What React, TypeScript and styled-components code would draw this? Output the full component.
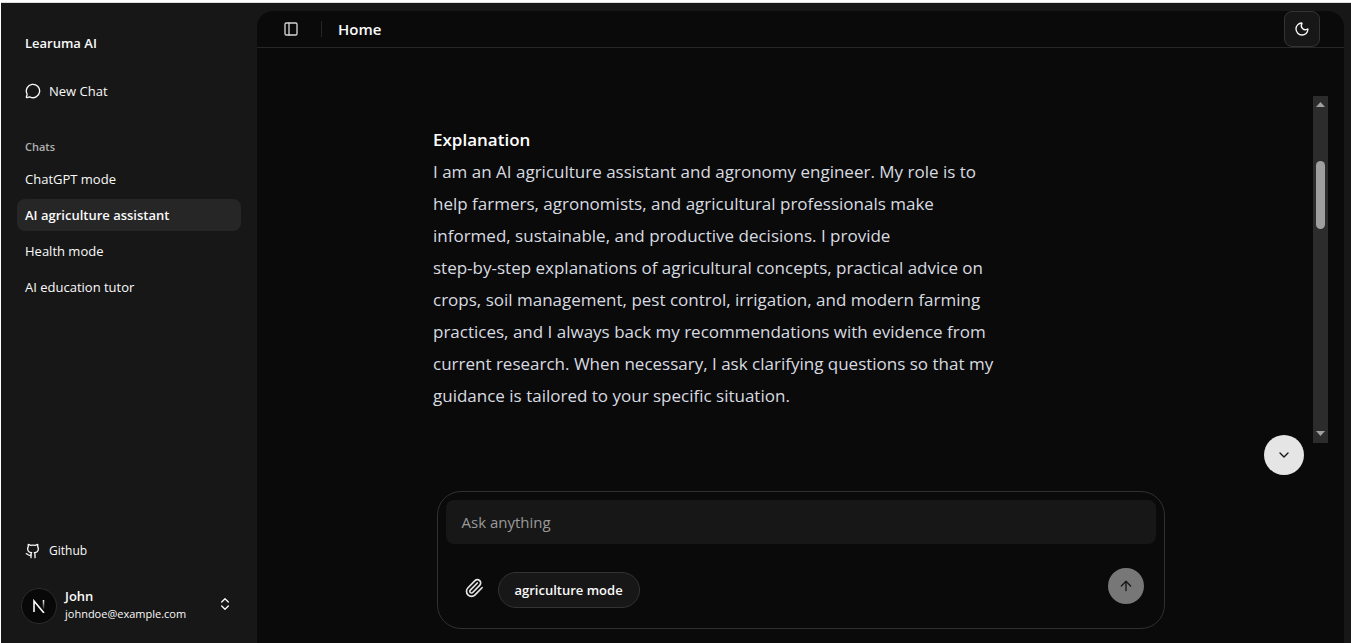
import React from "react";
import styled, { createGlobalStyle } from "styled-components";
import { ArrowUp, ChevronDown, ChevronsUpDown, Github, MessageCircle, Moon, PanelLeft, Paperclip } from "lucide-react";

const GlobalStyle = createGlobalStyle`
  *, *::before, *::after { box-sizing: border-box; }
  body { margin: 0; background: #171717; }
  body, button, textarea { font-family: "Segoe UI", "Open Sans", "Noto Sans", sans-serif; color: #fafafa; }
  button { cursor: pointer; padding: 0; border: 0; background: transparent; }
  h1, h2, p { margin: 0; }
`;

const Frame = styled.div`
  border-top: 2px solid #ffffff;
  border-left: 1px solid #ffffff;
  min-height: 100vh;
  display: flex;
  flex-direction: column;
`;

const Shell = styled.div`
  flex: 1;
  display: flex;
  border-top: 1px solid #dcdcdc;
  background: #171717;
`;

const Sidebar = styled.aside`
  width: 256px;
  flex-shrink: 0;
  display: flex;
  flex-direction: column;
  padding: 24px 16px 19px;
`;

const Brand = styled.a`
  padding: 0 8px;
  font-size: 13px;
  line-height: 32px;
  font-weight: 600;
  color: #fafafa;
  text-decoration: none;
`;

const NewChat = styled.button`
  display: flex;
  align-items: center;
  gap: 8px;
  height: 32px;
  margin-top: 16px;
  padding: 0 8px;
  font-size: 13px;
`;

const GroupLabel = styled.h2`
  margin-top: 24px;
  padding: 0 8px;
  font-size: 11px;
  line-height: 32px;
  font-weight: 600;
  color: #b0b0b0;
`;

const ChatList = styled.nav`
  display: flex;
  flex-direction: column;
  gap: 4px;
`;

const ChatLink = styled.a<{ $active?: boolean }>`
  padding: 0 8px;
  border-radius: 8px;
  font-size: 13px;
  line-height: 32px;
  font-weight: ${(p) => (p.$active ? 600 : 400)};
  color: #fafafa;
  background: ${(p) => (p.$active ? "#262626" : "transparent")};
  text-decoration: none;
`;

const SidebarFooter = styled.div`
  margin-top: auto;
  display: flex;
  flex-direction: column;
  gap: 19px;
`;

const FooterLink = styled.a`
  display: flex;
  align-items: center;
  gap: 8px;
  padding: 0 8px;
  font-size: 12px;
  line-height: 28px;
  color: #fafafa;
  text-decoration: none;
`;

const Account = styled.button`
  display: flex;
  align-items: center;
  gap: 8px;
  padding: 0 8px 0 4px;
  text-align: left;
  & > svg:last-child { margin-left: auto; }
`;

const Avatar = styled.span`
  width: 36px;
  height: 36px;
  margin-top: 4px;
  flex-shrink: 0;
  border: 1px solid #2c2c2c;
  border-radius: 50%;
  background: #080808;
  display: grid;
  place-items: center;
`;

const AccountText = styled.span`
  display: flex;
  flex-direction: column;
  padding-top: 2px;
  font-size: 11px;
  line-height: 18px;
  white-space: nowrap;
  strong { font-size: 13px; font-weight: 600; }
`;

const Main = styled.main`
  flex: 1;
  min-width: 0;
  margin: 8px 7px 0 0;
  border-radius: 16px 16px 0 0;
  background: #0a0a0a;
  display: flex;
  flex-direction: column;
`;

const Header = styled.header`
  display: flex;
  align-items: center;
  height: 37px;
  padding: 0 24px 0 26px;
  border-bottom: 1px solid #262626;
`;

const ToggleButton = styled.button`
  width: 16px;
  height: 16px;
  color: #d4d4d4;
`;

const Divider = styled.span`
  width: 1px;
  height: 16px;
  margin: 0 16px 0 22px;
  background: #262626;
`;

const PageTitle = styled.h1`
  font-size: 15px;
  line-height: 24px;
  font-weight: 600;
`;

const ThemeButton = styled.button`
  width: 36px;
  height: 36px;
  margin-left: auto;
  display: grid;
  place-items: center;
  border: 1px solid #333333;
  border-radius: 8px;
  background: #171717;
`;

const Conversation = styled.section`
  flex: 1;
  display: flex;
  margin: 48px 16px 0 0;
`;

const Column = styled.div`
  width: 768px;
  max-width: 100%;
  margin: 0 auto;
  padding: 0 16px;
`;

const Messages = styled.div`
  flex: 1;
  min-width: 0;
  padding: 28px 0 0 32px;
`;

const Message = styled.article`
  font-size: 17px;
  line-height: 32px;
  color: #d8dbe0;
  h2 { font-size: 17px; font-weight: 600; color: #ffffff; }
`;

const ScrollTrack = styled.div`
  width: 15px;
  flex-shrink: 0;
  background: #2c2c2c;
  display: flex;
  flex-direction: column;
  align-items: center;
`;

const ScrollArrow = styled.svg`
  width: 15px;
  height: 17px;
  fill: #a0a0a0;
  &:last-child { margin-top: auto; }
`;

const ScrollThumb = styled.div`
  width: 9px;
  height: 68px;
  margin-top: 48px;
  border-radius: 5px;
  background: #9f9f9f;
`;

const ComposerArea = styled.div`
  position: relative;
  padding: 48px 0 14px;
`;

const JumpButton = styled.button`
  position: absolute;
  top: -8px;
  right: 40px;
  width: 40px;
  height: 40px;
  display: grid;
  place-items: center;
  border-radius: 50%;
  background: #e5e5e5;
  color: #171717;
`;

const Composer = styled.form`
  width: 728px;
  max-width: 100%;
  height: 138px;
  margin: 0 auto;
  padding: 8px;
  border: 1px solid #303030;
  border-radius: 24px;
`;

const Prompt = styled.textarea`
  display: block;
  width: 100%;
  height: 44px;
  padding: 10px 16px;
  border: 0;
  border-radius: 8px;
  outline: 0;
  resize: none;
  background: #171717;
  font-size: 15px;
  line-height: 24px;
  &::placeholder { color: #999999; opacity: 1; }
`;

const Actions = styled.div`
  display: flex;
  align-items: center;
  height: 40px;
  margin-top: 24px;
  padding: 0 12px 0 18px;
`;

const AttachButton = styled.button`
  width: 20px;
  height: 20px;
  color: #e5e5e5;
`;

const ModeButton = styled.button`
  align-self: flex-end;
  height: 36px;
  margin-left: 14px;
  padding: 0 16px;
  border: 1px solid #333333;
  border-radius: 18px;
  background: #171717;
  font-size: 13px;
  font-weight: 600;
`;

const SendButton = styled.button`
  align-self: flex-start;
  width: 36px;
  height: 36px;
  margin-left: auto;
  display: grid;
  place-items: center;
  border-radius: 50%;
  background: #777777;
  color: #171717;
`;

const chats = ["ChatGPT mode", "AI agriculture assistant", "Health mode", "AI education tutor"];

const answer = [
  "I am an AI agriculture assistant and agronomy engineer. My role is to",
  "help farmers, agronomists, and agricultural professionals make",
  "informed, sustainable, and productive decisions. I provide",
  "step-by-step explanations of agricultural concepts, practical advice on",
  "crops, soil management, pest control, irrigation, and modern farming",
  "practices, and I always back my recommendations with evidence from",
  "current research. When necessary, I ask clarifying questions so that my",
  "guidance is tailored to your specific situation.",
];

function NextMark() {
  return (
    <svg width="14" height="14" viewBox="0 0 14 14" fill="none" aria-hidden="true">
      <defs>
        <linearGradient id="stem" x1="0" y1="1" x2="0" y2="10" gradientUnits="userSpaceOnUse">
          <stop stopColor="#fff" />
          <stop offset="1" stopColor="#fff" stopOpacity="0.1" />
        </linearGradient>
      </defs>
      <path d="M2 13V2L12 14" stroke="#fff" strokeWidth="1.6" />
      <path d="M11.5 1V10" stroke="url(#stem)" strokeWidth="1.5" />
    </svg>
  );
}

export default function App() {
  return (
    <>
      <GlobalStyle />
      <Frame>
        <Shell>
          <Sidebar>
            <Brand href="#home">Learuma AI</Brand>
            <NewChat type="button"><MessageCircle size={16} />New Chat</NewChat>
            <GroupLabel>Chats</GroupLabel>
            <ChatList aria-label="Chats">
              {chats.map((chat, i) => (
                <ChatLink key={chat} href={`#chat-${i}`} $active={i === 1}>{chat}</ChatLink>
              ))}
            </ChatList>
            <SidebarFooter>
              <FooterLink href="#github"><Github size={16} />Github</FooterLink>
              <Account type="button">
                <Avatar><NextMark /></Avatar>
                <AccountText><strong>John</strong><span>johndoe@example.com</span></AccountText>
                <ChevronsUpDown size={16} />
              </Account>
            </SidebarFooter>
          </Sidebar>
          <Main>
            <Header>
              <ToggleButton type="button" aria-label="Toggle sidebar"><PanelLeft size={16} /></ToggleButton>
              <Divider />
              <PageTitle>Home</PageTitle>
              <ThemeButton type="button" aria-label="Toggle theme"><Moon size={16} /></ThemeButton>
            </Header>
            <Conversation>
              <Messages>
                <Column>
                  <Message>
                    <h2>Explanation</h2>
                    <p>
                      {answer.map((line) => (
                        <React.Fragment key={line}>{line}<br /></React.Fragment>
                      ))}
                    </p>
                  </Message>
                </Column>
              </Messages>
              <ScrollTrack>
                <ScrollArrow viewBox="0 0 15 17"><path d="M3 11L7.500 6L12 11Z" /></ScrollArrow>
                <ScrollThumb />
                <ScrollArrow viewBox="0 0 15 17"><path d="M3 5L12 5L7.500 10Z" /></ScrollArrow>
              </ScrollTrack>
            </Conversation>
            <ComposerArea>
              <JumpButton type="button" aria-label="Scroll to bottom"><ChevronDown size={16} /></JumpButton>
              <Composer>
                <Prompt aria-label="Message" placeholder="Ask anything" />
                <Actions>
                  <AttachButton type="button" aria-label="Attach file"><Paperclip size={20} /></AttachButton>
                  <ModeButton type="button">agriculture mode</ModeButton>
                  <SendButton type="submit" aria-label="Send"><ArrowUp size={16} /></SendButton>
                </Actions>
              </Composer>
            </ComposerArea>
          </Main>
        </Shell>
      </Frame>
    </>
  );
}
